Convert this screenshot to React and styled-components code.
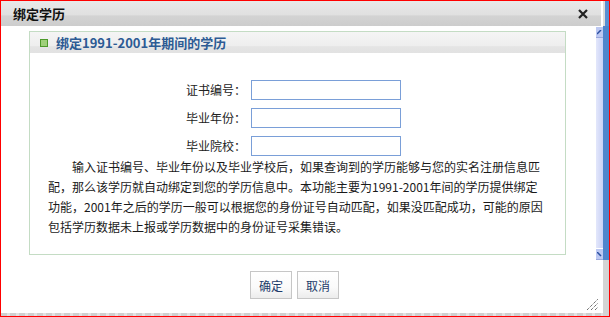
import React from "react";
import styled, { createGlobalStyle } from "styled-components";

const Global = createGlobalStyle`
  html, body { margin: 0; padding: 0; background: #fff; }
  body {
    width: 610px; height: 317px; overflow: hidden;
    font-family: "Noto Sans CJK SC", "Liberation Sans", sans-serif;
    text-spacing-trim: space-all;
    font-kerning: none;
    font-feature-settings: "chws" 0, "halt" 0, "palt" 0, "kern" 0;
  }
  * { box-sizing: border-box; }
`;

const Frame = styled.div`
  width: 610px;
  height: 317px;
  border: 1px solid #ff0000;
  display: flex;
  background: #fff;
`;

const Dialog = styled.div`
  width: 602px;
  display: flex;
  flex-direction: column;
  position: relative;
  background: #fff;
`;

const TitleBar = styled.div`
  height: 25px;
  width: 601px;
  flex: none;
  display: flex;
  align-items: center;
  justify-content: space-between;
  padding: 0 13px 0 12px;
  background: linear-gradient(#e9e9e9 0%, #e0e0e0 55%, #d3d3d3 60%, #cdcdcd 100%);
  border-right: 1px solid #fff;
`;

const Title = styled.span`
  font-size: 13px;
  font-weight: bold;
  color: #111;
  line-height: 1;
`;

const CloseIcon = styled.svg`
  width: 10px;
  height: 10px;
  display: block;
`;

const Body = styled.div`
  flex: 1;
  display: flex;
  min-height: 0;
`;

const Content = styled.div`
  flex: 1;
  display: flex;
  flex-direction: column;
  padding: 5px 0 0 28px;
`;

const Panel = styled.div`
  width: 537px;
  border: 1px solid #c4dcc4;
`;

const PanelHeader = styled.div`
  height: 21px;
  display: flex;
  align-items: center;
  gap: 8px;
  padding-left: 10px;
  background: linear-gradient(#f5f5f5 0%, #eeeeee 65%, #e4e4e4 70%, #e2e2e2 100%);
`;

const Square = styled.span`
  width: 8px;
  height: 8px;
  background: #9fd07a;
  border: 1px solid #4d9a2a;
  flex: none;
`;

const PanelTitle = styled.span`
  font-size: 13px;
  font-weight: bold;
  color: #2d5b94;
  line-height: 1;
`;

const Form = styled.div`
  display: grid;
  grid-template-columns: 216px 150px;
  column-gap: 5px;
  row-gap: 8px;
  margin-top: 27px;
  align-items: center;
`;

const Label = styled.label`
  text-align: right;
  font-size: 12px;
  color: #222;
  line-height: 20px;
`;

const Input = styled.input`
  width: 150px;
  height: 20px;
  border: 1px solid #7a9fd8;
  padding: 0 3px;
  margin: 0;
  outline: none;
  font-size: 12px;
`;

const Desc = styled.p`
  margin: 1px 0 0 0;
  padding: 0 10px 17px 18px;
  font-size: 12px;
  line-height: 20px;
  color: #1a1a1a;
  text-indent: 24px;
  white-space: nowrap;
`;

const Buttons = styled.div`
  display: flex;
  gap: 5px;
  margin-top: 16px;
  padding-left: 221px;
`;

const Button = styled.button`
  width: 42px;
  height: 28px;
  border: 1px solid #c6c6c6;
  background: linear-gradient(#ffffff 0%, #fafafa 60%, #ececec 100%);
  color: #1d3b6a;
  font-family: "Noto Sans CJK SC", sans-serif;
  font-size: 12px;
  padding: 0;
  cursor: pointer;
`;

const Scroll = styled.div`
  width: 7px;
  display: flex;
  flex-direction: column;
`;

const Track = styled.div`
  height: 234px;
  background: linear-gradient(90deg, #e3e7fb, #c9d1f5);
  display: flex;
  flex-direction: column;
  justify-content: space-between;
`;

const Arrow = styled.div`
  height: 12px;
  background: #bcc8f2;
  border-top: 1px solid #fff;
  border-bottom: 1px solid #9aa8dc;
  display: flex;
  align-items: center;
  justify-content: center;
`;

const ScrollRest = styled.div`
  flex: 1;
  background: #fff;
`;

const BottomLine = styled.div`
  height: 3px;
  flex: none;
  background: repeating-linear-gradient(90deg, #cfcfcf 0 6px, #e2e2e2 6px 9px);
`;

const Grip = styled.svg`
  position: absolute;
  right: 4px;
  bottom: 5px;
  width: 13px;
  height: 13px;
`;

const Edge = styled.div`
  flex: 1;
  display: flex;
  flex-direction: column;
`;

const EdgeTop = styled.div`
  height: 25px;
  background: linear-gradient(90deg, #dcdcdc 0 2px, #5a8fd2 2px);
`;

const EdgeMid = styled.div`
  height: 234px;
  background: #4f86cc;
`;

const EdgeBottom = styled.div`
  flex: 1;
  background: #d4d4d4;
`;

const rows = [
  "证书编号：",
  "毕业年份：",
  "毕业院校：",
];

export default function App() {
  return (
    <>
      <Global />
      <Frame>
        <Dialog>
          <TitleBar>
            <Title>绑定学历</Title>
            <CloseIcon viewBox="0 0 10 10">
              <path d="M1 1 L9 9 M9 1 L1 9" stroke="#222" strokeWidth="2.2" />
            </CloseIcon>
          </TitleBar>
          <Body>
            <Content>
              <Panel>
                <PanelHeader>
                  <Square />
                  <PanelTitle>绑定1991-2001年期间的学历</PanelTitle>
                </PanelHeader>
                <Form>
                  {rows.map((r) => (
                    <React.Fragment key={r}>
                      <Label>{r}</Label>
                      <Input type="text" />
                    </React.Fragment>
                  ))}
                </Form>
                <Desc>
                  输入证书编号、毕业年份以及毕业学校后，如果查询到的学历能够与您的实名注册信息匹
                  <br />
                  配，那么该学历就自动绑定到您的学历信息中。本功能主要为1991-2001年间的学历提供绑定
                  <br />
                  功能，2001年之后的学历一般可以根据您的身份证号自动匹配，如果没匹配成功，可能的原因
                  <br />
                  包括学历数据未上报或学历数据中的身份证号采集错误。
                </Desc>
              </Panel>
              <Buttons>
                <Button>确定</Button>
                <Button>取消</Button>
              </Buttons>
            </Content>
            <Scroll>
              <Track>
                <Arrow>
                  <svg width="5" height="5" viewBox="0 0 5 5"><path d="M0 4 L4 0" stroke="#2b4fa0" strokeWidth="1.5" /></svg>
                </Arrow>
                <Arrow>
                  <svg width="5" height="5" viewBox="0 0 5 5"><path d="M0 0 L4 4" stroke="#2b4fa0" strokeWidth="1.5" /></svg>
                </Arrow>
              </Track>
              <ScrollRest />
            </Scroll>
          </Body>
          <BottomLine />
          <Grip viewBox="0 0 13 13">
            <path d="M1 12 L12 1 M5 12 L12 5 M9 12 L12 9" stroke="#333" strokeWidth="1" strokeDasharray="1 1" />
          </Grip>
        </Dialog>
        <Edge>
          <EdgeTop />
          <EdgeMid />
          <EdgeBottom />
        </Edge>
      </Frame>
    </>
  );
}
